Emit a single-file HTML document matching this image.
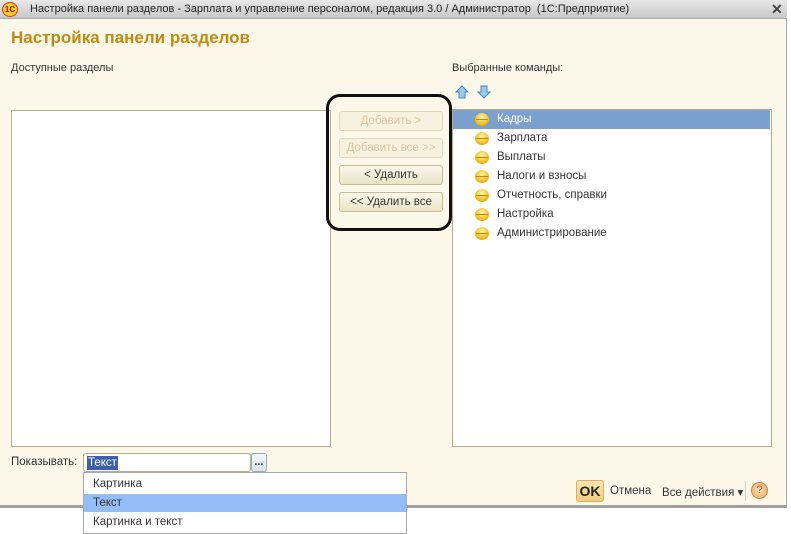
<!DOCTYPE html>
<html><head><meta charset="utf-8"><style>
*{margin:0;padding:0;box-sizing:border-box}
body{width:791px;height:532px;background:#fff;font-family:"Liberation Sans",sans-serif;font-size:11px;color:#333;position:relative;overflow:hidden}
.a{position:absolute}
.win{left:0;top:0;width:787px;height:508px;background:#fbf8ea;border-right:1px solid #aaa;border-bottom:3px solid #a0a0a0}
.title{left:0;top:0;width:787px;height:19px;background:linear-gradient(#e8e8e8,#c8c8c8);border-bottom:1px solid #aaa;font-size:11px;color:#222;line-height:18px}
.box{background:#fff;border:1px solid #b8ad86}
.btn{left:339px;width:104px;height:20px;border:1px solid #c9bc8e;border-radius:3px;background:linear-gradient(#fbf8ec,#ebe3c6);text-align:center;line-height:18px;font-size:11.5px;color:#333}
.dis{color:#d8c4a2;border-color:#e0d7b8;background:#f7f2e0}
.row{left:453px;width:317px;height:19px;line-height:19px;padding-left:44px;font-size:11.5px}
.ic{position:absolute;left:22px;top:3px;width:14px;height:13px;border-radius:50%;background:radial-gradient(circle at 50% 35%,#fff6b0,#f0c020 60%,#c89000);}
.ic:after{content:"";position:absolute;left:1px;right:1px;top:6px;height:1px;background:#c08a00}
</style></head><body>
<div class="a win"></div>
<div class="a title"><div class="a" style="left:2px;top:2px;width:16px;height:15px;border-radius:50%;background:#f5d020;border:1px solid #c33;color:#c00;font-size:8px;font-weight:bold;line-height:13px;text-align:center">1С</div><span class="a" style="left:30px;top:0">Настройка панели разделов - Зарплата и управление персоналом, редакция 3.0 / Администратор &nbsp;(1С:Предприятие)</span><span class="a" style="left:771px;top:0;font-weight:bold;font-size:14px;color:#444">✕</span></div>
<div class="a" style="left:11px;top:28px;font-size:17px;font-weight:bold;color:#c08a10">Настройка панели разделов</div>
<div class="a" style="left:11px;top:62px">Доступные разделы</div>
<div class="a" style="left:452px;top:62px">Выбранные команды:</div>
<svg class="a" style="left:455px;top:85px" width="36" height="14"><path d="M7 1 L13 7 H10 V13 H4 V7 H1 Z" fill="#9cc8ee" stroke="#4a86c0"/><path d="M29 13 L35 7 H32 V1 H26 V7 H23 Z" fill="#9cc8ee" stroke="#4a86c0"/></svg>
<div class="a box" style="left:11px;top:110px;width:320px;height:337px"></div>
<div class="a box" style="left:452px;top:109px;width:320px;height:338px"></div>
<div class="a" style="left:326px;top:94px;width:126px;height:137px;border:3px solid #111;border-radius:14px"></div>
<div class="a btn dis" style="top:111px">Добавить &gt;</div>
<div class="a btn dis" style="top:138px">Добавить все &gt;&gt;</div>
<div class="a btn" style="top:165px">&lt; Удалить</div>
<div class="a btn" style="top:192px">&lt;&lt; Удалить все</div>
<div class="a row" style="top:110px;background:#7b9fcf;color:#fff"><i class="ic"></i>Кадры</div>
<div class="a row" style="top:129px"><i class="ic"></i>Зарплата</div>
<div class="a row" style="top:148px"><i class="ic"></i>Выплаты</div>
<div class="a row" style="top:167px"><i class="ic"></i>Налоги и взносы</div>
<div class="a row" style="top:186px"><i class="ic"></i>Отчетность, справки</div>
<div class="a row" style="top:205px"><i class="ic"></i>Настройка</div>
<div class="a row" style="top:224px"><i class="ic"></i>Администрирование</div>
<div class="a" style="left:11px;top:456px;font-size:11.5px">Показывать:</div>
<div class="a" style="left:83px;top:453px;width:168px;height:19px;background:#fff;border:1px solid #b8ad86;border-radius:3px"><span class="a" style="left:3px;top:2px;background:#3c5fb0;color:#fff;padding:0 1px;line-height:14px;font-size:11.5px">Текст</span></div>
<div class="a" style="left:251px;top:453px;width:16px;height:19px;border:1px solid #9ab;border-radius:3px;background:linear-gradient(#f4f8fc,#d8e4f0);text-align:center;line-height:16px;font-weight:bold">...</div>
<div class="a" style="left:83px;top:472px;width:324px;height:62px;background:#fff;border:1px solid #aaa"></div>
<div class="a" style="left:84px;top:494px;width:322px;height:18px;background:#94bcf6"></div>
<div class="a" style="left:93px;top:478px;font-size:11.5px">Картинка</div>
<div class="a" style="left:93px;top:497px;font-size:11.5px">Текст</div>
<div class="a" style="left:93px;top:516px;font-size:11.5px">Картинка и текст</div>
<div class="a" style="left:576px;top:480px;width:28px;height:22px;border:1px solid #d8b060;border-radius:3px;background:linear-gradient(#fbe6b0,#f0cc80);font-weight:bold;font-size:14px;text-align:center;line-height:20px;color:#222">OK</div>
<div class="a" style="left:610px;top:485px;font-size:11.5px">Отмена</div>
<div class="a" style="left:662px;top:485px;font-size:11.5px">Все действия ▾</div>
<div class="a" style="left:745px;top:481px;width:1px;height:20px;background:#ccc"></div>
<div class="a" style="left:751px;top:482px;width:17px;height:17px;border-radius:50%;background:radial-gradient(#fde0b0,#e8a860);border:1px solid #c88a40;text-align:center;font-size:11px;line-height:15px;color:#865">?</div>
</body></html>
